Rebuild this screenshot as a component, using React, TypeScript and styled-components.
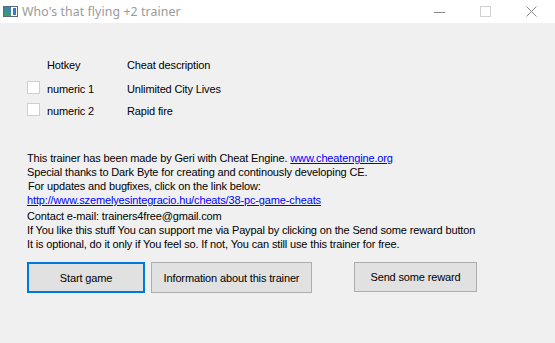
import React from "react";
import styled, { createGlobalStyle } from "styled-components";

const GlobalStyle = createGlobalStyle`
  html, body {
    margin: 0;
    padding: 0;
    background: #f0f0f0;
  }
  body {
    font-family: "Liberation Sans", Arial, sans-serif;
    font-size: 11px;
    letter-spacing: -0.14px;
    color: #000;
  }
`;

const cheats = [
  { key: "numeric 1", description: "Unlimited City Lives" },
  { key: "numeric 2", description: "Rapid fire" },
];

function WindowIcon() {
  return (
    <svg width="15" height="11" viewBox="0 0 15 11">
      <defs>
        <linearGradient id="g" x1="0" y1="0" x2="0" y2="1">
          <stop offset="0" stopColor="#3c7fb8" />
          <stop offset="1" stopColor="#3aa06a" />
        </linearGradient>
      </defs>
      <rect x="0.5" y="0.5" width="14" height="10" fill="#fff" stroke="#5a6a78" />
      <rect x="1" y="1" width="7" height="9" fill="url(#g)" />
      <rect x="10" y="2" width="3" height="7" fill="#3a78c8" />
    </svg>
  );
}

export default function App() {
  return (
    <>
      <GlobalStyle />
      <Window>
        <TitleBar>
          <WindowIcon />
          <Title>Who's that flying +2 trainer</Title>
          <Controls>
            <ControlButton>
              <svg width="11" height="11" viewBox="0 0 11 11">
                <line x1="0" y1="6.5" x2="11" y2="6.5" stroke="#8a8a8a" />
              </svg>
            </ControlButton>
            <ControlButton>
              <svg width="11" height="11" viewBox="0 0 11 11">
                <rect x="0.5" y="0.5" width="10" height="10" fill="none" stroke="#d0d0d0" />
              </svg>
            </ControlButton>
            <ControlButton>
              <svg width="11" height="11" viewBox="0 0 11 11">
                <path d="M0.5 0.5 L10.5 10.5 M10.5 0.5 L0.5 10.5" stroke="#8a8a8a" />
              </svg>
            </ControlButton>
          </Controls>
        </TitleBar>

        <Client>
          <CheatTable>
            <HeaderRow>
              <span />
              <Cell>Hotkey</Cell>
              <Cell>Cheat description</Cell>
            </HeaderRow>
            {cheats.map((c) => (
              <CheatRow key={c.key}>
                <CheckBox />
                <Cell>{c.key}</Cell>
                <Cell>{c.description}</Cell>
              </CheatRow>
            ))}
          </CheatTable>

          <Info>
            <Line>
              This trainer has been made by Geri with Cheat Engine.{" "}
              <Link href="#">www.cheatengine.org</Link>
            </Line>
            <Line>Special thanks to Dark Byte for creating and continously developing CE.</Line>
            <Line $indent>For updates and bugfixes, click on the link below:</Line>
            <Line>
              <Link href="#">http://www.szemelyesintegracio.hu/cheats/38-pc-game-cheats</Link>
            </Line>
            <Line $gap>Contact e-mail: trainers4free@gmail.com</Line>
            <Line>
              If You like this stuff You can support me via Paypal by clicking on the Send some reward button
            </Line>
            <Line>It is optional, do it only if You feel so. If not, You can still use this trainer for free.</Line>
          </Info>

          <ButtonRow>
            <Button $focused $width={118}>Start game</Button>
            <Button $width={161}>Information about this trainer</Button>
            <Button $width={123} $height={30} $push>Send some reward</Button>
          </ButtonRow>
        </Client>
      </Window>
    </>
  );
}

const Window = styled.div`
  width: 555px;
  height: 343px;
  display: flex;
  flex-direction: column;
  overflow: hidden;
`;

const TitleBar = styled.div`
  height: 23px;
  flex-shrink: 0;
  background: #fff;
  display: flex;
  align-items: center;
  padding-left: 3px;
`;

const Title = styled.span`
  margin-left: 4px;
  font-family: "Noto Sans", "Open Sans", sans-serif;
  font-size: 12.3px;
  letter-spacing: 0.1px;
  color: #9a9a9a;
  white-space: nowrap;
`;

const Controls = styled.div`
  margin-left: auto;
  display: flex;
  align-items: center;
  padding-right: 18px;
  gap: 35px;
`;

const ControlButton = styled.div`
  width: 11px;
  height: 11px;
  display: flex;
`;

const Client = styled.div`
  flex: 1;
  background: #f0f0f0;
  padding: 35px 0 0 27px;
`;

const CheatTable = styled.div`
  display: flex;
  flex-direction: column;
  gap: 9px;
`;

const HeaderRow = styled.div`
  display: grid;
  grid-template-columns: 20px 80px auto;
  height: 14px;
  line-height: 14px;
`;

const CheatRow = styled.div`
  display: grid;
  grid-template-columns: 20px 80px auto;
  align-items: start;
  height: 13px;
  line-height: 14px;

  & > span {
    padding-top: 1px;
  }
`;

const Cell = styled.span`
  white-space: nowrap;
`;

const CheckBox = styled.div`
  width: 13px;
  height: 13px;
  box-sizing: border-box;
  border: 1px solid #cfcfcf;
  background: #fff;
`;

const Info = styled.div`
  margin-top: 35px;
  line-height: 14px;
`;

const Line = styled.div<{ $gap?: boolean; $indent?: boolean }>`
  white-space: nowrap;
  margin-top: ${(p) => (p.$gap ? "2px" : "0")};
  padding-left: ${(p) => (p.$indent ? "1px" : "0")};
`;

const Link = styled.a`
  color: #0000ff;
  text-decoration: underline;
`;

const ButtonRow = styled.div`
  margin-top: 11px;
  display: flex;
  align-items: flex-start;
  gap: 6px;
`;

const Button = styled.button<{
  $focused?: boolean;
  $width: number;
  $height?: number;
  $push?: boolean;
}>`
  width: ${(p) => p.$width}px;
  height: ${(p) => p.$height ?? 31}px;
  margin-left: ${(p) => (p.$push ? "36px" : "0")};
  box-sizing: border-box;
  padding: 0;
  background: #e1e1e1;
  border: ${(p) => (p.$focused ? "2px solid #0078d7" : "1px solid #adadad")};
  border-radius: 0;
  font-family: "Liberation Sans", Arial, sans-serif;
  font-size: 11px;
  letter-spacing: -0.14px;
  color: #000;
`;
